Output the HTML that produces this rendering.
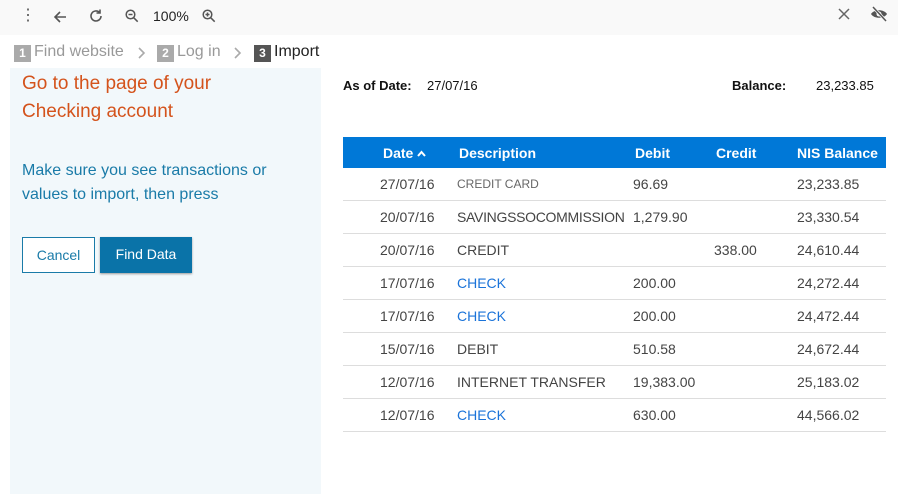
<!DOCTYPE html>
<html><head><style>
body{margin:0;width:901px;height:494px;background:#fff;font-family:"Liberation Sans",sans-serif;position:relative;overflow:hidden}
.a{position:absolute;white-space:nowrap}
.top{position:absolute;left:0;top:0;width:898px;height:35px;background:#f9f9f9}
.crumb{font-size:16px;color:#999;top:43px}
.num{display:inline-block;width:17px;height:17px;background:#aaa;color:#fff;font-size:12px;font-weight:bold;text-align:center;line-height:17px;vertical-align:-1px;margin-right:3px}
.left{position:absolute;left:10px;top:68px;width:311px;height:426px;background:#f2f8fb}
table{position:absolute;left:343px;top:137px;width:543px;border-collapse:collapse;font-size:14px;color:#444;table-layout:fixed}
th{background:#0078d7;color:#fff;height:31px;font-weight:bold;text-align:left;padding:0;white-space:nowrap;overflow:hidden}
td{height:32px;border-bottom:1px solid #ddd;padding:0;white-space:nowrap;overflow:visible}
.l{color:#1a73d9}
</style></head><body>
<div class="top"></div>
<div class="a" style="left:20px;top:7px;font-size:16px;color:#555;line-height:18px">⋮</div>
<svg class="a" style="left:52px;top:9px" width="16" height="16" viewBox="0 0 16 16"><path d="M14 8H3M8 3L3 8l5 5" stroke="#555" stroke-width="1.6" fill="none"/></svg>
<svg class="a" style="left:88px;top:8px" width="16" height="16" viewBox="0 0 16 16"><path d="M13 8a5 5 0 1 1-1.5-3.6M12 1.5v3.5H8.5" stroke="#555" stroke-width="1.6" fill="none"/></svg>
<svg class="a" style="left:124px;top:8px" width="16" height="16" viewBox="0 0 16 16"><circle cx="6.5" cy="6.5" r="4.3" stroke="#555" stroke-width="1.5" fill="none"/><path d="M9.7 9.7l4 4M4.5 6.5h4" stroke="#555" stroke-width="1.5"/></svg>
<div class="a" style="left:153px;top:8px;font-size:14px;color:#222">100%</div>
<svg class="a" style="left:201px;top:8px" width="16" height="16" viewBox="0 0 16 16"><circle cx="6.5" cy="6.5" r="4.3" stroke="#555" stroke-width="1.5" fill="none"/><path d="M9.7 9.7l4 4M4.5 6.5h4M6.5 4.5v4" stroke="#555" stroke-width="1.5"/></svg>
<svg class="a" style="left:837px;top:7px" width="14" height="14" viewBox="0 0 14 14"><path d="M2 2l10 10M12 2L2 12" stroke="#666" stroke-width="1.5"/></svg>
<svg class="a" style="left:870px;top:5px" width="18" height="18" viewBox="0 0 18 18"><path d="M1 9c3-5 13-5 16 0-3 5-13 5-16 0z" fill="#555"/><circle cx="9" cy="9" r="2.5" fill="#f9f9f9"/><path d="M3 2l13 14" stroke="#f9f9f9" stroke-width="3"/><path d="M3 2l13 14" stroke="#555" stroke-width="1.5"/></svg>
<div class="a crumb" style="left:14px"><span class="num">1</span>Find website</div>
<svg class="a" style="left:137px;top:47px" width="10" height="12" viewBox="0 0 10 12"><path d="M2 1l5 5-5 5" stroke="#aaa" stroke-width="1.6" fill="none"/></svg>
<div class="a crumb" style="left:157px"><span class="num">2</span>Log in</div>
<svg class="a" style="left:233px;top:47px" width="10" height="12" viewBox="0 0 10 12"><path d="M2 1l5 5-5 5" stroke="#aaa" stroke-width="1.6" fill="none"/></svg>
<div class="a crumb" style="left:254px;color:#222"><span class="num" style="background:#555">3</span>Import</div>
<div class="left"></div>
<div class="a" style="left:22px;top:70px;font-size:19px;color:#d4531c;line-height:28px">Go to the page of your<br>Checking account</div>
<div class="a" style="left:22px;top:159px;font-size:16px;color:#1a7ba8;line-height:24px">Make sure you see transactions or<br>values to import, then press</div>
<div class="a" style="left:22px;top:237px;width:71px;height:34px;border:1px solid #1a7ba8;background:#fff;color:#1a7ba8;font-size:14px;text-align:center;line-height:34px">Cancel</div>
<div class="a" style="left:100px;top:237px;width:92px;height:36px;background:#0a73a8;color:#fff;font-size:14px;text-align:center;line-height:35px;box-shadow:0 1px 2px #999">Find Data</div>
<div class="a" style="left:343px;top:78px;font-size:13px;font-weight:bold;color:#111">As of Date:</div>
<div class="a" style="left:427px;top:78px;font-size:13px;color:#111">27/07/16</div>
<div class="a" style="left:732px;top:78px;font-size:13px;font-weight:bold;color:#111">Balance:</div>
<div class="a" style="left:816px;top:78px;font-size:13px;color:#111">23,233.85</div>
<table>
<colgroup><col style="width:114px"><col style="width:176px"><col style="width:81px"><col style="width:83px"><col style="width:89px"></colgroup>
<tr><th style="text-indent:40px">Date <svg width="9" height="8" viewBox="0 0 9 8"><path d="M1 6l3.5-4 3.5 4" stroke="#fff" stroke-width="2" fill="none"/></svg></th><th style="text-indent:2px">Description</th><th style="text-indent:2px">Debit</th><th style="text-indent:2px">Credit</th><th>NIS Balance</th></tr>
<tr><td style="text-indent:37px">27/07/16</td><td style="font-size:12px;color:#666">CREDIT CARD</td><td>96.69</td><td></td><td>23,233.85</td></tr>
<tr><td style="text-indent:37px">20/07/16</td><td style="letter-spacing:-0.3px">SAVINGSSOCOMMISSION</td><td>1,279.90</td><td></td><td>23,330.54</td></tr>
<tr><td style="text-indent:37px">20/07/16</td><td>CREDIT</td><td></td><td>338.00</td><td>24,610.44</td></tr>
<tr><td style="text-indent:37px">17/07/16</td><td class="l">CHECK</td><td>200.00</td><td></td><td>24,272.44</td></tr>
<tr><td style="text-indent:37px">17/07/16</td><td class="l">CHECK</td><td>200.00</td><td></td><td>24,472.44</td></tr>
<tr><td style="text-indent:37px">15/07/16</td><td>DEBIT</td><td>510.58</td><td></td><td>24,672.44</td></tr>
<tr><td style="text-indent:37px">12/07/16</td><td>INTERNET TRANSFER</td><td>19,383.00</td><td></td><td>25,183.02</td></tr>
<tr><td style="text-indent:37px">12/07/16</td><td class="l">CHECK</td><td>630.00</td><td></td><td>44,566.02</td></tr>
</table>
</body></html>
